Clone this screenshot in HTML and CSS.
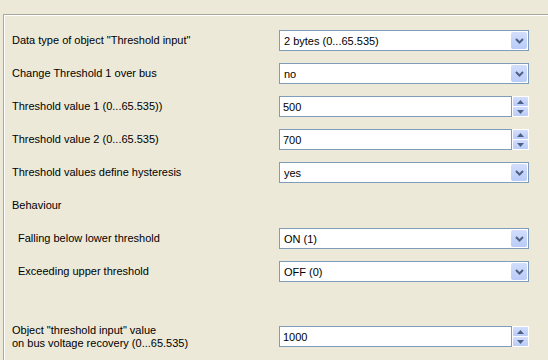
FILE: index.html
```html
<!DOCTYPE html>
<html lang="en">
  <head>
    <meta charset="UTF-8" />
    <title>Threshold parameters</title>
    <link rel="stylesheet" href="styles.css">
  </head>
  <body>
    <div class="panel">
      <div class="row">
        <div class="label">Data type of object "Threshold input"</div>
        <div class="combo">
          <span class="value">2 bytes (0...65.535)</span>
          <span class="drop"><svg width="9" height="6" viewBox="0 0 9 6"><path d="M1 1 L4.5 4.5 L8 1" fill="none" stroke="#4d6185" stroke-width="2"/></svg></span>
        </div>
      </div>
      <div class="row">
        <div class="label">Change Threshold 1 over bus</div>
        <div class="combo">
          <span class="value">no</span>
          <span class="drop"><svg width="9" height="6" viewBox="0 0 9 6"><path d="M1 1 L4.5 4.5 L8 1" fill="none" stroke="#4d6185" stroke-width="2"/></svg></span>
        </div>
      </div>
      <div class="row">
        <div class="label">Threshold value 1 (0...65.535))</div>
        <div class="spin">
          <span class="field">500</span>
          <span class="arrows">
            <span class="btn"><svg width="7" height="4" viewBox="0 0 7 4"><path d="M0 4 L3.5 0 L7 4 Z" fill="#4d6185"/></svg></span>
            <span class="btn"><svg width="7" height="4" viewBox="0 0 7 4"><path d="M0 0 L3.5 4 L7 0 Z" fill="#4d6185"/></svg></span>
          </span>
        </div>
      </div>
      <div class="row">
        <div class="label">Threshold value 2 (0...65.535)</div>
        <div class="spin">
          <span class="field">700</span>
          <span class="arrows">
            <span class="btn"><svg width="7" height="4" viewBox="0 0 7 4"><path d="M0 4 L3.5 0 L7 4 Z" fill="#4d6185"/></svg></span>
            <span class="btn"><svg width="7" height="4" viewBox="0 0 7 4"><path d="M0 0 L3.5 4 L7 0 Z" fill="#4d6185"/></svg></span>
          </span>
        </div>
      </div>
      <div class="row">
        <div class="label">Threshold values define hysteresis</div>
        <div class="combo">
          <span class="value">yes</span>
          <span class="drop"><svg width="9" height="6" viewBox="0 0 9 6"><path d="M1 1 L4.5 4.5 L8 1" fill="none" stroke="#4d6185" stroke-width="2"/></svg></span>
        </div>
      </div>
      <div class="row">
        <div class="label">Behaviour</div>
      </div>
      <div class="row">
        <div class="label sub">Falling below lower threshold</div>
        <div class="combo">
          <span class="value">ON (1)</span>
          <span class="drop"><svg width="9" height="6" viewBox="0 0 9 6"><path d="M1 1 L4.5 4.5 L8 1" fill="none" stroke="#4d6185" stroke-width="2"/></svg></span>
        </div>
      </div>
      <div class="row">
        <div class="label sub">Exceeding upper threshold</div>
        <div class="combo">
          <span class="value">OFF (0)</span>
          <span class="drop"><svg width="9" height="6" viewBox="0 0 9 6"><path d="M1 1 L4.5 4.5 L8 1" fill="none" stroke="#4d6185" stroke-width="2"/></svg></span>
        </div>
      </div>
      <div class="spacer"></div>
      <div class="row">
        <div class="label">Object "threshold input" value<br>on bus voltage recovery (0...65.535)</div>
        <div class="spin">
          <span class="field">1000</span>
          <span class="arrows">
            <span class="btn"><svg width="7" height="4" viewBox="0 0 7 4"><path d="M0 4 L3.5 0 L7 4 Z" fill="#4d6185"/></svg></span>
            <span class="btn"><svg width="7" height="4" viewBox="0 0 7 4"><path d="M0 0 L3.5 4 L7 0 Z" fill="#4d6185"/></svg></span>
          </span>
        </div>
      </div>
    </div>
  </body>
</html>
```

FILE: styles.css
```css
html, body {
  margin: 0;
  height: 100%;
  overflow: hidden;
  background: #ece9d8;
}
body {
  font-family: "Liberation Sans", Arial, sans-serif;
  font-size: 11px;
  color: #000;
}
.panel {
  box-sizing: border-box;
  margin: 14px 0 0 3px;
  width: 545px;
  height: 346px;
  padding-top: 9px;
  border-top: 1px solid #aca899;
  border-left: 1px solid #aca899;
  box-shadow: inset 1px 1px 0 #fff;
}
.row {
  display: grid;
  grid-template-columns: 275px 250px;
  align-items: center;
  height: 33px;
}
.label {
  padding-left: 8px;
  line-height: 13px;
}
.label.sub {
  padding-left: 14px;
}
.spacer {
  height: 32px;
}
.combo {
  display: flex;
  align-items: center;
  height: 21px;
  box-sizing: border-box;
  border: 1px solid #7f9db9;
  background: #fff;
}
.combo .value {
  flex: 1;
  padding-left: 4px;
}
.drop {
  display: flex;
  align-items: center;
  justify-content: center;
  width: 16px;
  height: 17px;
  margin-right: 1px;
  background: linear-gradient(#d3defd, #b9cbf8);
  border-radius: 2px;
}
.spin {
  display: flex;
  height: 21px;
}
.field {
  display: flex;
  align-items: center;
  flex: 1;
  box-sizing: border-box;
  border: 1px solid #7f9db9;
  background: #fff;
  padding-left: 3px;
}
.arrows {
  display: flex;
  flex-direction: column;
  width: 17px;
  box-sizing: border-box;
  border: 1px solid #fff;
  background: #fff;
  gap: 1px;
}
.btn {
  flex: 1;
  display: flex;
  align-items: center;
  justify-content: center;
  background: linear-gradient(#d3defd, #b9cbf8);
  border-radius: 1px;
}
```
